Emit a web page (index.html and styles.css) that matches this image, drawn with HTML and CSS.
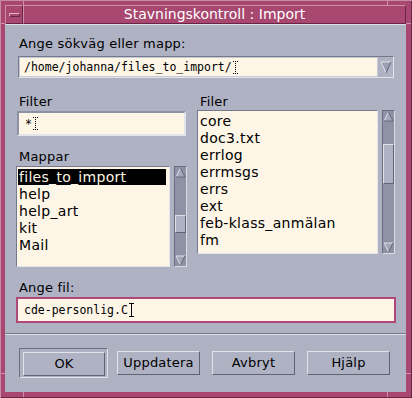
FILE: index.html
```html
<!DOCTYPE html>
<html lang="sv">
<head>
<meta charset="UTF-8">
<title>Stavningskontroll : Import</title>
<link rel="stylesheet" href="styles.css">
</head>
<body>
<div class="window">
  <div class="titlebar">
    <div class="wm-menu"><span></span></div>
    <div class="wm-title">Stavningskontroll : Import</div>
  </div>
  <div class="client">
    <div class="pane">
      <div class="lbl">Ange sökväg eller mapp:</div>
      <div class="combo">
        <div class="combo-text">/home/johanna/files_to_import/<svg class="ibeam" width="5" height="13" viewBox="0 0 5 13"><path d="M0 .5h5M2.5 0v13M0 12.5h5" stroke="#000" stroke-dasharray="1 1" fill="none"/></svg></div>
        <div class="combo-arrow"><svg width="14" height="18" viewBox="0 0 14 18"><path d="M2 4h10L7 15z" fill="#9a9eb0"/><path d="M2 4h10" stroke="#e4e5ec"/><path d="M2 4l5 11" stroke="#e4e5ec"/><path d="M12 4L7 15" stroke="#5f6375"/></svg></div>
      </div>

      <div class="cols">
        <div class="col">
          <div class="lbl">Filter</div>
          <div class="field filter">*<svg class="ibeam" width="5" height="13" viewBox="0 0 5 13"><path d="M0 .5h5M2.5 0v13M0 12.5h5" stroke="#000" stroke-dasharray="1 1" fill="none"/></svg></div>
          <div class="lbl gap-top">Mappar</div>
          <div class="listbox dirs">
            <div class="list">
              <div class="item selected">files_to_import</div>
              <div class="item">help</div>
              <div class="item">help_art</div>
              <div class="item">kit</div>
              <div class="item">Mail</div>
            </div>
            <div class="scrollbar">
              <div class="arrow"><svg width="11" height="11" viewBox="0 0 11 11"><path d="M1 10L5.5 1 10 10z" fill="#a3a7b9"/><path d="M1 10L5.5 1" stroke="#dfe1e8"/><path d="M5.5 1L10 10H1" stroke="#626678" fill="none"/></svg></div>
              <div class="track"><div class="thumb" style="margin-top:37px;height:18px"></div></div>
              <div class="arrow"><svg width="11" height="11" viewBox="0 0 11 11"><path d="M1 1h9L5.5 10z" fill="#a3a7b9"/><path d="M10 1H1l4.5 9" stroke="#dfe1e8" fill="none"/><path d="M10 1L5.5 10" stroke="#626678"/></svg></div>
            </div>
          </div>
        </div>
        <div class="col">
          <div class="lbl">Filer</div>
          <div class="listbox files">
            <div class="list">
              <div class="item">core</div>
              <div class="item">doc3.txt</div>
              <div class="item">errlog</div>
              <div class="item">errmsgs</div>
              <div class="item">errs</div>
              <div class="item">ext</div>
              <div class="item">feb-klass_anmälan</div>
              <div class="item">fm</div>
            </div>
            <div class="scrollbar">
              <div class="arrow"><svg width="11" height="11" viewBox="0 0 11 11"><path d="M1 10L5.5 1 10 10z" fill="#a3a7b9"/><path d="M1 10L5.5 1" stroke="#dfe1e8"/><path d="M5.5 1L10 10H1" stroke="#626678" fill="none"/></svg></div>
              <div class="track"><div class="thumb" style="margin-top:22px;height:40px"></div></div>
              <div class="arrow"><svg width="11" height="11" viewBox="0 0 11 11"><path d="M1 1h9L5.5 10z" fill="#a3a7b9"/><path d="M10 1H1l4.5 9" stroke="#dfe1e8" fill="none"/><path d="M10 1L5.5 10" stroke="#626678"/></svg></div>
            </div>
          </div>
        </div>
      </div>

      <div class="lbl file-lbl">Ange fil:</div>
      <div class="field filename">cde-personlig.C<svg class="ibeam" width="5" height="14" viewBox="0 0 5 14"><path d="M0 .5h5M2.5 0v14M0 13.5h5" stroke="#000" fill="none"/></svg></div>
    </div>

    <div class="sep"></div>

    <div class="buttons">
      <div class="default-ring"><div class="btn">OK</div></div>
      <div class="btn">Uppdatera</div>
      <div class="btn">Avbryt</div>
      <div class="btn">Hjälp</div>
    </div>
  </div>
</div>
</body>
</html>
```

FILE: styles.css
```css
html, body { margin: 0; padding: 0; }
body { font-family: "DejaVu Sans", "Liberation Sans", sans-serif; color: #000; }

/* window manager frame */
.window {
  width: 412px; height: 398px; box-sizing: border-box;
  padding: 5px 6px 6px 5px;
  display: flex; flex-direction: column;
  background:
    linear-gradient(#d28fac, #d28fac) 23px 0 / 1px 100% no-repeat,
    linear-gradient(#d28fac, #d28fac) 387px 0 / 1px 100% no-repeat,
    linear-gradient(#d28fac, #d28fac) 0 23px / 100% 1px no-repeat,
    linear-gradient(#d28fac, #d28fac) 0 373px / 100% 1px no-repeat,
    #a8476f;
  box-shadow: inset 1px 1px 0 #c98aa5, inset -1px -1px 0 #6a2446;
}
.titlebar { display: flex; height: 19px; background: #a8476f; }
.wm-menu {
  width: 18px; box-sizing: border-box;
  border: 1px solid; border-color: #d28fac #6a2446 #6a2446 #d28fac;
  display: flex; align-items: center; justify-content: center;
}
.wm-menu span {
  width: 11px; height: 4px; box-sizing: border-box;
  border: 1px solid; border-color: #e6b5ca #6a2446 #6a2446 #e6b5ca;
}
.wm-title {
  flex: 1; box-sizing: border-box;
  border: 1px solid; border-color: #d28fac #6a2446 #6a2446 #d28fac;
  color: #fff; font-size: 14px; line-height: 17px; text-align: center;
}

.client {
  flex: 1; background: #aeb2c3;
  display: flex; flex-direction: column;
  border-top: 1px solid #dcdee6;
}
.pane { padding: 11px 10px 0 11px; }

.lbl { font-size: 13px; line-height: 16px; padding-left: 3px; letter-spacing: .2px; }
.gap-top { margin-top: 13px; }
.file-lbl { margin-top: 13px; }

/* text fields */
.combo {
  margin: 4px 0 0 2px; width: 376px; height: 22px; box-sizing: border-box;
  display: flex;
  border: 1px solid; border-color: #75798b #e4e5ec #e4e5ec #75798b;
}
.combo-text {
  flex: 1; background: #fdf5e6; border: 1px solid; border-color: #c5c8d5 #c5c8d5 #c5c8d5 #c5c8d5;
  font-family: "DejaVu Sans Mono", monospace; font-size: 11.5px; line-height: 18px; padding-left: 4px;
  display: flex; align-items: center;
}
.combo-arrow { width: 15px; display: flex; align-items: center; justify-content: center; }
.ibeam { margin-left: 1px; flex: none; }

.field {
  box-sizing: border-box; background: #fdf5e6;
  font-family: "DejaVu Sans Mono", monospace; font-size: 11.5px;
  display: flex; align-items: center; padding-left: 6px;
}
.filter {
  margin: 1px 0 0 1px; width: 169px; height: 25px;
  border: 2px solid; border-color: #8d91a3 #e4e5ec #e4e5ec #8d91a3;
}
.filename {
  margin-top: 1px; width: 380px; height: 26px; padding-left: 6px;
  border: 2px solid #b0477a;
}

/* lists */
.cols { display: grid; grid-template-columns: 171px 198px; column-gap: 10px; margin-top: 16px; }
.listbox { display: flex; gap: 4px; }
.dirs { height: 101px; margin-top: 1px; }
.files { height: 144px; }
.list {
  flex: 1; box-sizing: border-box; background: #fdf5e6; overflow: hidden;
  border: 1px solid; border-color: #75798b #e4e5ec #e4e5ec #75798b;
  padding: 2px 3px 0 1px;
}
.item { font-size: 14px; line-height: 17px; letter-spacing: .3px; padding-left: 1px; white-space: nowrap; }
.item.selected { background: #000; color: #fdf5e6; line-height: 16px; margin-bottom: 1px; }

.scrollbar {
  width: 13px; box-sizing: border-box; background: #8e92a4;
  border: 1px solid; border-color: #696d7f #dcdee6 #dcdee6 #696d7f;
  display: flex; flex-direction: column;
}
.arrow { height: 11px; display: flex; }
.track { flex: 1; }
.thumb {
  box-sizing: border-box; background: #aeb2c3;
  border: 1px solid; border-color: #dfe1e8 #5f6375 #5f6375 #dfe1e8;
}

.sep { margin-top: 10px; height: 1px; background: #75798b; border-bottom: 1px solid #dfe1e8; }

/* buttons */
.buttons { display: flex; align-items: center; padding: 13px 0 0 14px; }
.default-ring {
  padding: 3px 2px 1px 3px; margin-right: 9px;
  border: 1px solid; border-color: #6c7082 #dfe1e8 #dfe1e8 #6c7082;
}
.btn {
  width: 83px; height: 24px; box-sizing: border-box;
  border: 1px solid; border-color: #e1e3ea #5f6375 #5f6375 #e1e3ea;
  font-size: 13px; line-height: 22px; text-align: center; letter-spacing: .2px;
  margin-right: 12px;
}
.default-ring .btn { margin-right: 0; width: 82px; }
```
